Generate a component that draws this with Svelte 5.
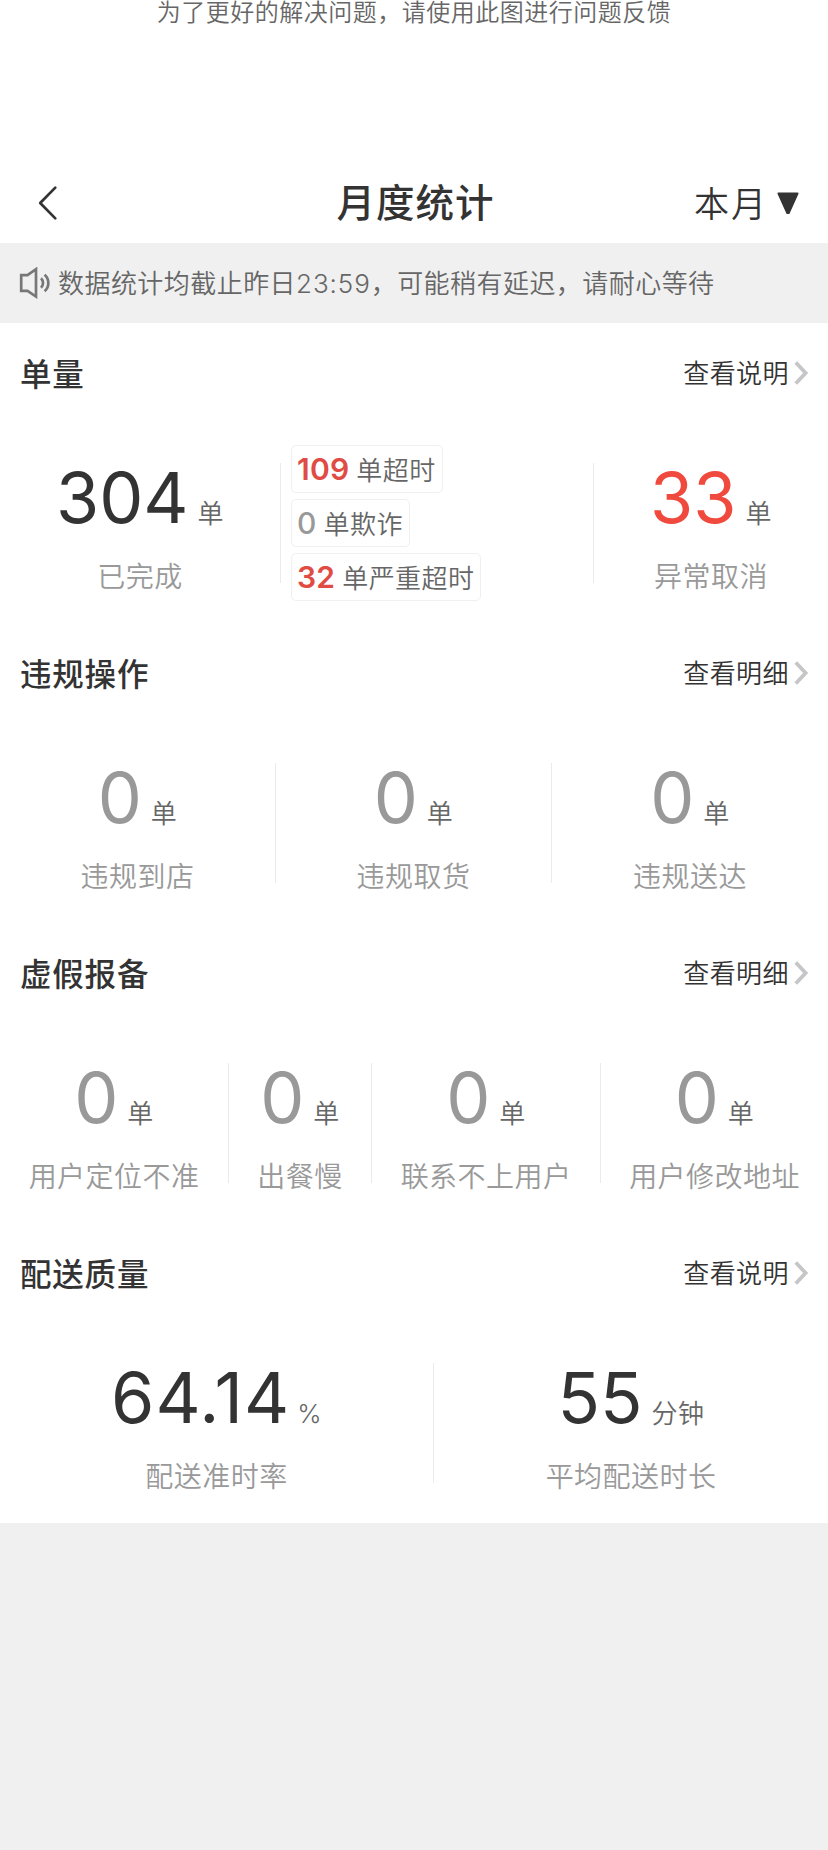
<script>
  const sections = [
    {
      title: '单量',
      link: '查看说明',
      layout: 'orders',
      cells: [
        { value: '304', unit: '单', label: '已完成', tone: 'dark' },
        {
          tags: [
            { value: 109, label: '单超时' },
            { value: 0, label: '单欺诈' },
            { value: 32, label: '单严重超时' },
          ],
        },
        { value: '33', unit: '单', label: '异常取消', tone: 'red' },
      ],
    },
    {
      title: '违规操作',
      link: '查看明细',
      layout: 'violations',
      cells: [
        { value: '0', unit: '单', label: '违规到店' },
        { value: '0', unit: '单', label: '违规取货' },
        { value: '0', unit: '单', label: '违规送达' },
      ],
    },
    {
      title: '虚假报备',
      link: '查看明细',
      layout: 'reports',
      cells: [
        { value: '0', unit: '单', label: '用户定位不准' },
        { value: '0', unit: '单', label: '出餐慢' },
        { value: '0', unit: '单', label: '联系不上用户' },
        { value: '0', unit: '单', label: '用户修改地址' },
      ],
    },
    {
      title: '配送质量',
      link: '查看说明',
      layout: 'quality',
      cells: [
        { value: '64.14', unit: '%', label: '配送准时率', tone: 'dark' },
        { value: '55', unit: '分钟', label: '平均配送时长', tone: 'dark' },
      ],
    },
  ]
</script>

<div class="page">
  <p class="hint">为了更好的解决问题，请使用此图进行问题反馈</p>

  <header class="navbar">
    <button class="back" aria-label="返回">
      <svg width="20" height="36" viewBox="0 0 20 36" fill="none">
        <path d="M17.3 2.6L2.2 18l15.1 15.4" stroke="#333" stroke-width="2.7" stroke-linecap="round" stroke-linejoin="round" />
      </svg>
    </button>
    <h1>月度统计</h1>
    <button class="month">
      <span>本月</span>
      <svg width="22" height="23" viewBox="0 0 22 23">
        <path d="M1.5 1.5h19L11.7 21h-1.4z" fill="#333" stroke="#333" stroke-width="2" stroke-linejoin="round" />
      </svg>
    </button>
  </header>

  <div class="notice">
    <svg width="32" height="32" viewBox="0 0 32 32" fill="none" stroke="#777" stroke-width="2.7">
      <path d="M2.2 8.2h6.3L17 2.2v27.3l-8.5-5.7H2.2z" />
      <path d="M22 11.2c2.7 2.5 2.7 7 0 9.5M25.6 7.7c5 4.5 5 12 0 16.5" />
    </svg>
    <span>数据统计均截止昨日<span class="time">23:59</span>，可能稍有延迟，请耐心等待</span>
  </div>

  {#each sections as section (section.title)}
    <section>
      <div class="section-head">
        <h2>{section.title}</h2>
        <button class="more">
          <span>{section.link}</span>
          <svg width="15" height="26" viewBox="0 0 15 26" fill="none">
            <path d="M1.8 2.5L11.6 13 1.8 23.5" stroke="#c6c6c9" stroke-width="3.8" />
          </svg>
        </button>
      </div>
      <div class="cells {section.layout}">
        {#each section.cells as cell}
          {#if cell.tags}
            <div class="cell tags">
              {#each cell.tags as tag}
                <div class="tag">
                  <b class:zero={tag.value === 0}>{tag.value}</b>
                  <span>{tag.label}</span>
                </div>
              {/each}
            </div>
          {:else}
            <div class="cell">
              <div class="figure" class:percent={cell.unit === '%'}>
                <span class="value {cell.tone}">{cell.value}</span>
                <span class="unit">{cell.unit}</span>
              </div>
              <div class="label">{cell.label}</div>
            </div>
          {/if}
        {/each}
      </div>
    </section>
  {/each}
</div>

<style>
  :global(body) {
    background: #f0f0f0;
  }
  .page {
    background: #fff;
    color: #333;
    font-family: Inter, 'Noto Sans CJK SC', sans-serif;
    font-size: 26px;
    font-weight: 350;
    letter-spacing: 0.45px;
  }
  h1,
  h2,
  p {
    margin: 0;
  }
  button {
    display: flex;
    align-items: center;
    padding: 0;
    border: none;
    background: none;
    color: inherit;
    font: inherit;
    letter-spacing: inherit;
  }
  svg {
    display: block;
    flex: none;
  }
  .hint {
    height: 163px;
    line-height: 26px;
    text-align: center;
    font-size: 24px;
    letter-spacing: 0.5px;
    color: #666;
  }
  .navbar {
    display: grid;
    grid-template-columns: 1fr auto 1fr;
    align-items: center;
    height: 80px;
    padding: 0 29px 0 38px;
  }
  h1 {
    margin-right: 6px;
    padding-bottom: 6px;
    font-size: 38.5px;
    font-weight: 500;
    letter-spacing: 1px;
  }
  .month {
    justify-self: end;
    gap: 9px;
    font-size: 35px;
    letter-spacing: 2px;
  }
  .month span {
    padding-bottom: 4px;
  }
  .notice {
    display: flex;
    align-items: center;
    gap: 7px;
    height: 80px;
    padding-left: 19px;
    background: #f0f0f0;
    color: #666;
  }
  .notice > span {
    padding-bottom: 4px;
  }
  .time {
    letter-spacing: 0.9px;
  }
  section {
    height: 300px;
  }
  .section-head {
    display: flex;
    justify-content: space-between;
    align-items: center;
    height: 100px;
    padding: 0 19px 0 20px;
  }
  h2 {
    padding-bottom: 3px;
    font-size: 31.5px;
    font-weight: 500;
    letter-spacing: 0.8px;
  }
  .more {
    gap: 5px;
  }
  .more span {
    padding-bottom: 3px;
  }
  .cells {
    display: grid;
    grid-template-rows: 120px;
    margin-top: 40px;
  }
  .orders {
    grid-template-columns: 281px 313px 1fr;
  }
  .violations {
    grid-template-columns: repeat(3, 1fr);
  }
  .reports {
    grid-template-columns: 229px 143px 229px 1fr;
  }
  .quality {
    grid-template-columns: 434px 1fr;
  }
  .cell {
    display: flex;
    flex-direction: column;
    align-items: center;
    border-right: 1px solid #ebebeb;
    white-space: nowrap;
  }
  .cell:last-child {
    border-right: none;
  }
  .figure {
    display: flex;
    flex: none;
    align-items: baseline;
    gap: 9px;
    height: 97px;
    line-height: 69px;
  }
  .value {
    font-size: 70px;
    font-weight: 400;
    letter-spacing: 0;
    color: #999;
  }
  .value.dark {
    color: #333;
  }
  .value.red {
    color: #f04a3e;
  }
  .percent .value {
    letter-spacing: 1px;
  }
  .percent {
    gap: 7px;
  }
  .unit {
    color: #666;
  }
  .label {
    line-height: 34px;
    font-size: 28px;
    color: #999;
  }
  .tags {
    align-items: flex-start;
    justify-content: center;
    gap: 6px;
    padding-left: 10px;
  }
  .tag {
    display: flex;
    flex: none;
    align-items: baseline;
    gap: 7px;
    box-sizing: border-box;
    height: 48px;
    padding: 0 6px 0 5px;
    border: 1px solid #f0f0f0;
    border-radius: 5px;
    line-height: 47px;
    color: #666;
  }
  .tag b {
    font-size: 30px;
    font-weight: 600;
    letter-spacing: 0.2px;
    color: #e04b43;
  }
  .tag b.zero {
    font-weight: 500;
    color: #999;
  }
</style>
